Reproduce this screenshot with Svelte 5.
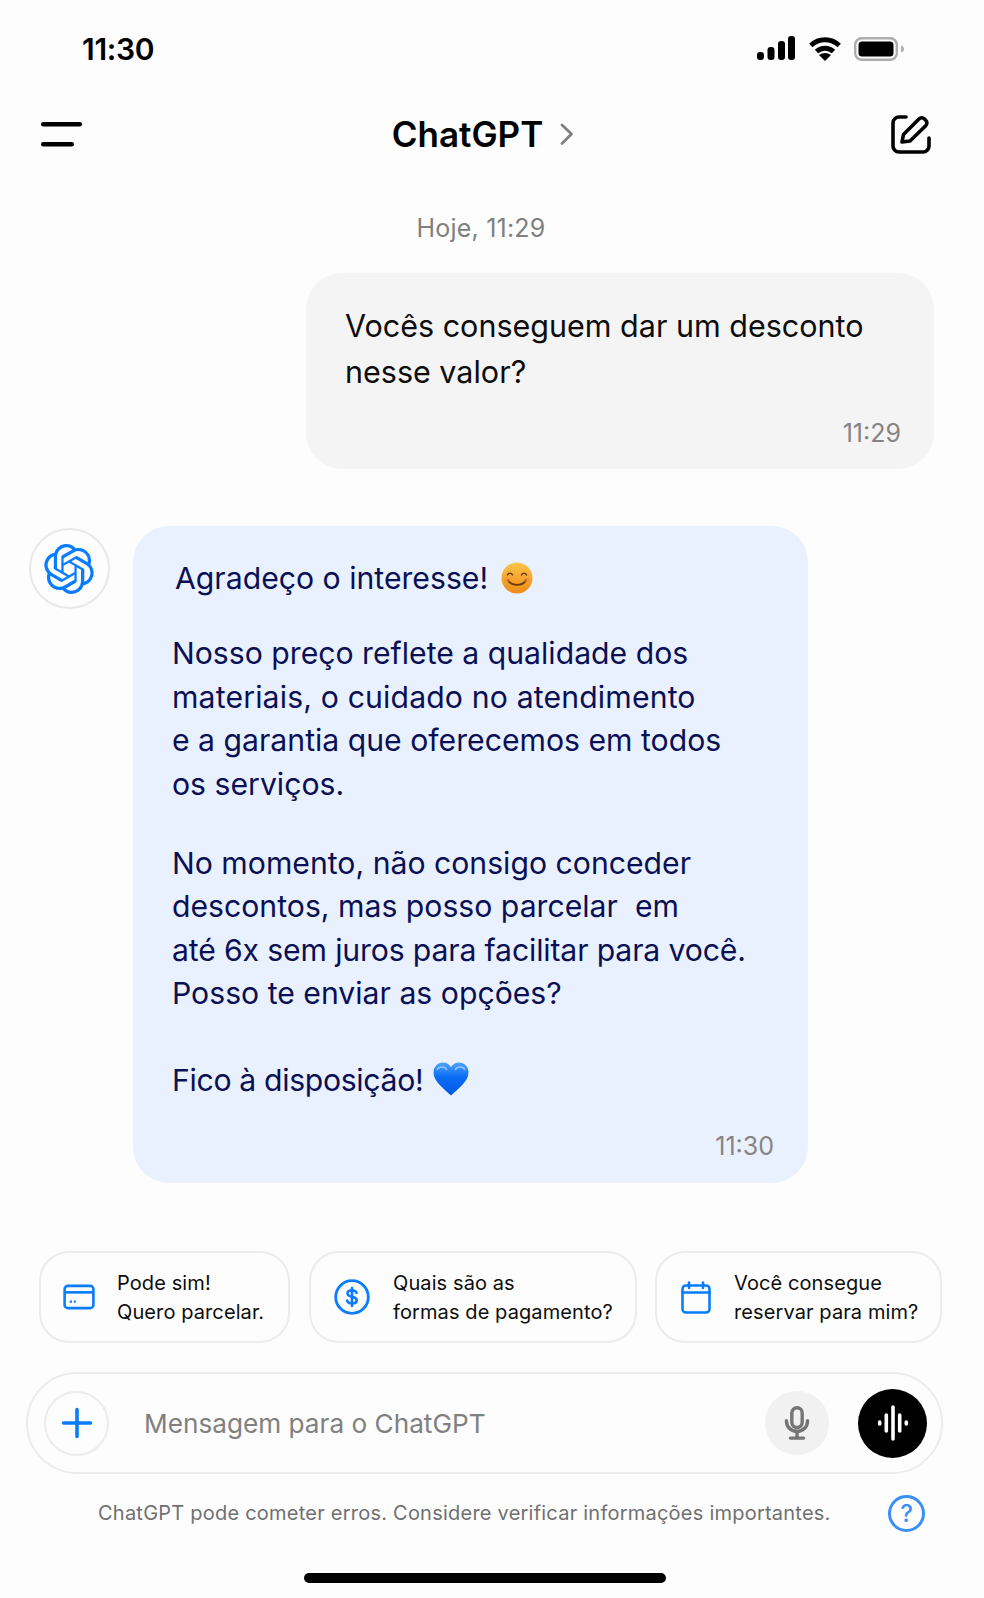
<script>
  const chips = [
    { id: 'card', l1: 'Pode sim!', l2: 'Quero parcelar.', cls: 'c1' },
    { id: 'dollar', l1: 'Quais são as', l2: 'formas de pagamento?', cls: 'c2' },
    { id: 'cal', l1: 'Você consegue', l2: 'reservar para mim?', cls: 'c3' }
  ];
</script>

<div class="page">
  <div class="status">
    <span class="clock">11:30</span>
    <div class="status-icons">
      <svg width="38" height="26" viewBox="0 0 38 26" fill="#000">
        <rect x="0" y="16" width="7" height="8" rx="3"/>
        <rect x="10.500" y="11" width="7" height="13" rx="3"/>
        <rect x="21" y="5" width="7" height="19" rx="3"/>
        <rect x="31" y="0" width="7" height="24" rx="3"/>
      </svg>
      <svg width="32" height="24" viewBox="0 0 32 24" fill="none" stroke="#000" stroke-width="5">
        <path d="M1.800 8.500C10 .8 22 .8 30.200 8.500"/>
        <path d="M7.500 14.500C12.500 10 19.500 10 24.500 14.500"/>
        <path d="M16 24l-6-6c3.500-2.800 8.500-2.800 12 0z" fill="#000" stroke="none"/>
      </svg>
      <svg width="51" height="24" viewBox="0 0 51 24">
        <rect x="1.200" y="1.200" width="41.600" height="21.600" rx="6.500" fill="none" stroke="#adadad" stroke-width="2.400"/>
        <rect x="4.500" y="4.500" width="35" height="15" rx="3.500" fill="#000"/>
        <path d="M47 8.500c2 .5 3 2 3 3.500s-1 3-3 3.500z" fill="#adadad"/>
      </svg>
    </div>
  </div>

  <header class="nav">
    <svg class="menu" width="42" height="26" viewBox="0 0 42 26" fill="#000">
      <rect x="0" y="1" width="41" height="4.400" rx="2.200"/>
      <rect x="0" y="21" width="33" height="4.400" rx="2.200"/>
    </svg>
    <div class="title">
      <span>ChatGPT</span>
      <svg width="16" height="24" viewBox="0 0 16 24" fill="none" stroke="#808080" stroke-width="2.800" stroke-linecap="round" stroke-linejoin="round"><path d="M3 3l9.500 9L3 21.500"/></svg>
    </div>
    <svg class="edit" width="40" height="40" viewBox="0 0 40 40" fill="none" stroke="#000" stroke-width="3.600" stroke-linecap="round" stroke-linejoin="round">
      <path d="M15 3H8a6 6 0 0 0-6 6v23a6 6 0 0 0 6 6h24a6 6 0 0 0 6-6v-8"/>
      <path d="M11 28l1.500-7.500L28 5a3.800 3.800 0 0 1 5.500 0l1.200 1.200a3.800 3.800 0 0 1 0 5.500L19 27z"/>
    </svg>
  </header>

  <div class="day">Hoje, 11:29</div>

  <div class="user-row">
    <div class="user-bubble">
      <p>Vocês conseguem dar um desconto<br />nesse valor?</p>
      <div class="time">11:29</div>
    </div>
  </div>

  <div class="bot-row">
    <div class="avatar">
      <svg class="logo" width="50" height="50" viewBox="0 0 24 24" fill="#0a7cff"><path d="M22.2819 9.8211a5.9847 5.9847 0 0 0-.5157-4.9108 6.0462 6.0462 0 0 0-6.5098-2.9A6.0651 6.0651 0 0 0 4.9807 4.1818a5.9847 5.9847 0 0 0-3.9977 2.9 6.0462 6.0462 0 0 0 .7427 7.0966 5.98 5.98 0 0 0 .511 4.9107 6.051 6.051 0 0 0 6.5146 2.9001A5.9847 5.9847 0 0 0 13.2599 24a6.0557 6.0557 0 0 0 5.7718-4.2058 5.9894 5.9894 0 0 0 3.9977-2.9001 6.0557 6.0557 0 0 0-.7475-7.0729zm-9.022 12.6081a4.4755 4.4755 0 0 1-2.8764-1.0408l.1419-.0804 4.7783-2.7582a.7948.7948 0 0 0 .3927-.6813v-6.7369l2.02 1.1686a.071.071 0 0 1 .038.052v5.5826a4.504 4.504 0 0 1-4.4945 4.4944zm-9.6607-4.1254a4.4708 4.4708 0 0 1-.5346-3.0137l.142.0852 4.783 2.7582a.7712.7712 0 0 0 .7806 0l5.8428-3.3685v2.3324a.0804.0804 0 0 1-.0332.0615L9.74 19.9502a4.4992 4.4992 0 0 1-6.1408-1.6464zM2.3408 7.8956a4.485 4.485 0 0 1 2.3655-1.9728V11.6a.7664.7664 0 0 0 .3879.6765l5.8144 3.3543-2.0201 1.1685a.0757.0757 0 0 1-.071 0l-4.8303-2.7865A4.504 4.504 0 0 1 2.3408 7.872zm16.5963 3.8558L13.1038 8.364 15.1192 7.2a.0757.0757 0 0 1 .071 0l4.8303 2.7913a4.4944 4.4944 0 0 1-.6765 8.1042v-5.6772a.79.79 0 0 0-.407-.667zm2.0107-3.0231l-.142-.0852-4.7735-2.7818a.7759.7759 0 0 0-.7854 0L9.409 9.2297V6.8974a.0662.0662 0 0 1 .0284-.0615l4.8303-2.7866a4.4992 4.4992 0 0 1 6.6802 4.66zM8.3065 12.863l-2.02-1.1638a.0804.0804 0 0 1-.038-.0567V6.0742a4.4992 4.4992 0 0 1 7.3757-3.4537l-.142.0805L8.704 5.459a.7948.7948 0 0 0-.3927.6813zm1.0976-2.3654l2.602-1.4998 2.6069 1.4998v2.9994l-2.5974 1.4997-2.6067-1.4997Z"/></svg>
    </div>
    <div class="bot-bubble">
      <p class="first">Agradeço o interesse!
        <svg class="emoji smile" width="32" height="32" viewBox="0 0 32 32">
          <defs><linearGradient id="sm" x1="0" y1="0" x2="0" y2="1"><stop offset="0" stop-color="#fcc44a"/><stop offset="1" stop-color="#ee8a16"/></linearGradient></defs>
          <circle cx="16" cy="16" r="15.500" fill="url(#sm)"/>
          <path d="M6.500 13c1-2.500 4-2.500 5 0M20.500 13c1-2.500 4-2.500 5 0" fill="none" stroke="#6b3c0a" stroke-width="1.500" stroke-linecap="round"/>
          <path d="M7 18c3 6.500 15 6.500 18 0" fill="none" stroke="#6b3c0a" stroke-width="1.800" stroke-linecap="round"/>
          <ellipse cx="6" cy="18" rx="3" ry="2" fill="#f28a3c" opacity=".5"/>
          <ellipse cx="26" cy="18" rx="3" ry="2" fill="#f28a3c" opacity=".5"/>
        </svg>
      </p>
      <p class="p2">Nosso preço reflete a qualidade dos<br /><span class="loose">materiais, o cuidado no atendimento</span><br />e a garantia que oferecemos em todos<br />os serviços.</p>
      <p class="p3">No momento, não consigo conceder<br />descontos, mas posso parcelar&nbsp; em<br /><span class="tight">até 6x sem juros para facilitar para você.</span><br />Posso te enviar as opções?</p>
      <p class="p4"><span class="closing">Fico à disposição!</span>
        <svg class="emoji heart" width="36" height="34" viewBox="0 0 36 34">
          <defs><linearGradient id="hr" x1="0" y1="0" x2="0" y2="1"><stop offset="0" stop-color="#4da3ff"/><stop offset=".45" stop-color="#0a6cf5"/><stop offset="1" stop-color="#0058e6"/></linearGradient></defs>
          <path d="M18 33.500C12 27.500 .5 20 .5 10.500 .5 4.500 5 .5 10 .5c3.500 0 6.500 1.800 8 4.800C19.500 2.300 22.500 .5 26 .5c5 0 9.500 4 9.500 10 0 9.500-11.500 17-17.500 23z" fill="url(#hr)"/>
          <path d="M4 8c1.500-4 8-4 10 0M22 8c2-4 8.500-4 10 0" fill="none" stroke="#b7dcff" stroke-width="1.500" opacity=".7"/>
        </svg>
      </p>
      <div class="time bot-time">11:30</div>
    </div>
  </div>

  <div class="chips">
    {#each chips as chip}
      <div class="chip {chip.cls}">
        {#if chip.id === 'card'}
          <svg width="32" height="26" viewBox="0 0 34 28" fill="none" stroke="#0a7cff" stroke-width="2.800" stroke-linejoin="round">
            <rect x="1.500" y="2" width="31" height="24" rx="3.500"/>
            <path d="M1.500 9h31"/>
            <path d="M7 19h2.500M11.500 19h2" stroke-width="2.400"/>
          </svg>
        {:else if chip.id === 'dollar'}
          <svg width="36" height="36" viewBox="0 0 36 36" fill="none">
            <circle cx="18" cy="18" r="16.300" stroke="#0a7cff" stroke-width="2.800"/>
            <path d="M22.500 14c-.5-1.800-2.300-2.700-4.500-2.700-2.600 0-4.500 1.200-4.500 3.200 0 4.500 9.200 2.200 9.200 6.800 0 2.100-2 3.200-4.700 3.200-2.500 0-4.400-1-4.900-3M18 9v18" stroke="#0a7cff" stroke-width="2.600" stroke-linecap="round"/>
          </svg>
        {:else}
          <svg width="30" height="33" viewBox="0 0 30 33" fill="none" stroke="#0a7cff" stroke-width="2.600" stroke-linecap="round" stroke-linejoin="round">
            <rect x="1.500" y="4.500" width="27" height="27" rx="3.500"/>
            <path d="M1.500 11.500h27M8 1.500v5.500M22 1.500v5.500"/>
          </svg>
        {/if}
        <div class="chip-text">{chip.l1}<br />{chip.l2}</div>
      </div>
    {/each}
  </div>

  <div class="composer">
    <div class="plus">
      <svg width="32" height="32" viewBox="0 0 32 32" stroke="#0a7cff" stroke-width="3.600" stroke-linecap="round"><path d="M16 2.500v27M2.500 16h27"/></svg>
    </div>
    <span class="placeholder">Mensagem para o ChatGPT</span>
    <div class="mic">
      <svg width="26" height="34" viewBox="0 0 26 36" fill="none" stroke="#757575" stroke-width="3.600" stroke-linecap="round">
        <rect x="7.500" y="1.800" width="11" height="21" rx="5.500"/>
        <path d="M1.800 15.500c0 15 22.400 15 22.400 0M13 27v7M6 34h14"/>
      </svg>
    </div>
    <div class="send">
      <svg width="32" height="36" viewBox="0 0 32 36" stroke="#fff" stroke-width="3.600" stroke-linecap="round"><path d="M2.700 17v2M9.300 10v16M16 2v32M22.700 10v16M29.300 17v2"/></svg>
    </div>
  </div>

  <div class="foot">
    <span class="disclaimer">ChatGPT pode cometer erros. Considere verificar informações importantes.</span>
    <div class="help">?</div>
  </div>

  <div class="home"></div>
</div>

<style>
  :global(body) {
    background: #fdfdfd;
  }

  .page {
    width: 984px;
    height: 1598px;
    box-sizing: border-box;
    font-family: Inter, "Liberation Sans", sans-serif;
    color: #000;
    background: #fdfdfd;
    overflow: hidden;
  }

  p {
    margin: 0;
  }

  .status {
    display: flex;
    justify-content: space-between;
    align-items: center;
    height: 26px;
    padding: 36px 79px 1px 82px;
  }

  .clock {
    font-size: 30px;
    font-weight: 600;
    letter-spacing: -0.3px;
  }

  .status-icons {
    display: flex;
    align-items: center;
    gap: 13.500px;
  }

  .nav {
    display: flex;
    align-items: center;
    justify-content: space-between;
    height: 44px;
    margin-top: 49px;
    padding: 0 53px 0 41px;
  }

  .title {
    display: flex;
    align-items: center;
    gap: 16px;
    font-size: 35px;
    font-weight: 600;
    margin-left: -7px;
  }

  .day {
    margin-top: 57px;
    padding-right: 22px;
    text-align: center;
    font-size: 25px;
    letter-spacing: 0.2px;
    line-height: 30px;
    color: #808080;
  }

  .user-row {
    display: flex;
    justify-content: flex-end;
    margin-top: 30px;
    padding-right: 50px;
  }

  .user-bubble {
    width: 628px;
    height: 196px;
    box-sizing: border-box;
    padding: 30px 33px 0 39px;
    background: #f4f4f4;
    border-radius: 36px;
    font-size: 30.500px;
    line-height: 46px;
    color: #0d0d0d;
  }

  .time {
    text-align: right;
    font-size: 25px;
    line-height: 30px;
    color: #858585;
    margin-top: 23px;
  }

  .bot-row {
    display: flex;
    align-items: flex-start;
    gap: 23px;
    margin-top: 57px;
    padding-left: 29px;
  }

  .avatar {
    flex: none;
    width: 81px;
    height: 81px;
    box-sizing: border-box;
    margin-top: 2px;
    border: 2px solid #e8e8e8;
    border-radius: 50%;
    display: flex;
    align-items: center;
    justify-content: center;
  }

  .logo {
    margin-right: 2px;
  }

  .bot-bubble {
    width: 675px;
    height: 657px;
    box-sizing: border-box;
    padding: 31px 34px 0 39px;
    background: #eaf1fe;
    border-radius: 36px;
    font-size: 30.200px;
    line-height: 43.400px;
    color: #0a1055;
  }

  .first {
    padding-left: 3px;
  }

  .p2 {
    margin-top: 32px;
  }

  .p3 {
    margin-top: 36px;
  }

  .p4 {
    margin-top: 43px;
  }

  .tight {
    letter-spacing: -0.15px;
  }

  .loose {
    letter-spacing: 0.15px;
  }

  .closing {
    letter-spacing: -0.33px;
  }

  .emoji {
    vertical-align: -5px;
  }

  .smile {
    margin-left: 4px;
  }

  .heart {
    margin-left: 1px;
  }

  .bot-time {
    margin-top: 29px;
  }

  .chips {
    display: flex;
    justify-content: flex-start;
    gap: 19px;
    margin-top: 68px;
    padding-left: 39px;
  }

  .chip {
    display: flex;
    align-items: center;
    height: 92px;
    box-sizing: border-box;
    border: 2px solid #ececec;
    border-radius: 30px;
    font-size: 20px;
    letter-spacing: 0.1px;
    line-height: 29px;
    color: #0d0d0d;
  }

  .chip-text {
    margin-top: 2px;
  }

  .c1 {
    width: 251px;
    padding-left: 22px;
    gap: 22px;
  }

  .c2 {
    width: 328px;
    padding-left: 23px;
    gap: 23px;
  }

  .c3 {
    width: 287px;
    margin-left: -1px;
    padding-left: 24px;
    gap: 23px;
  }

  .composer {
    display: flex;
    align-items: center;
    width: 917px;
    height: 102px;
    box-sizing: border-box;
    margin: 29px 0 0 26px;
    padding: 0 14px 0 16px;
    border: 2px solid #ececec;
    border-radius: 51px;
  }

  .plus {
    flex: none;
    width: 65px;
    height: 65px;
    box-sizing: border-box;
    border: 2px solid #ececec;
    border-radius: 50%;
    display: flex;
    align-items: center;
    justify-content: center;
  }

  .placeholder {
    flex: 1;
    margin-left: 35px;
    font-size: 26.200px;
    color: #808080;
  }

  .mic {
    flex: none;
    width: 64px;
    height: 64px;
    border-radius: 50%;
    background: #f1f1f1;
    display: flex;
    align-items: center;
    justify-content: center;
  }

  .send {
    flex: none;
    width: 69px;
    height: 69px;
    margin-left: 29px;
    border-radius: 50%;
    background: #000;
    display: flex;
    align-items: center;
    justify-content: center;
  }

  .foot {
    display: flex;
    align-items: center;
    height: 38px;
    margin-top: 20px;
    padding-left: 98px;
  }

  .disclaimer {
    width: 790px;
    font-size: 20px;
    color: #707070;
    letter-spacing: 0.23px;
  }

  .help {
    width: 37px;
    height: 37px;
    box-sizing: border-box;
    border: 3px solid #3b8ff5;
    border-radius: 50%;
    text-align: center;
    font-size: 24px;
    line-height: 31px;
    font-weight: 500;
    color: #3b8ff5;
  }

  .home {
    width: 362px;
    height: 10px;
    margin: 41px 0 0 304px;
    border-radius: 5px;
    background: #000;
  }
</style>
